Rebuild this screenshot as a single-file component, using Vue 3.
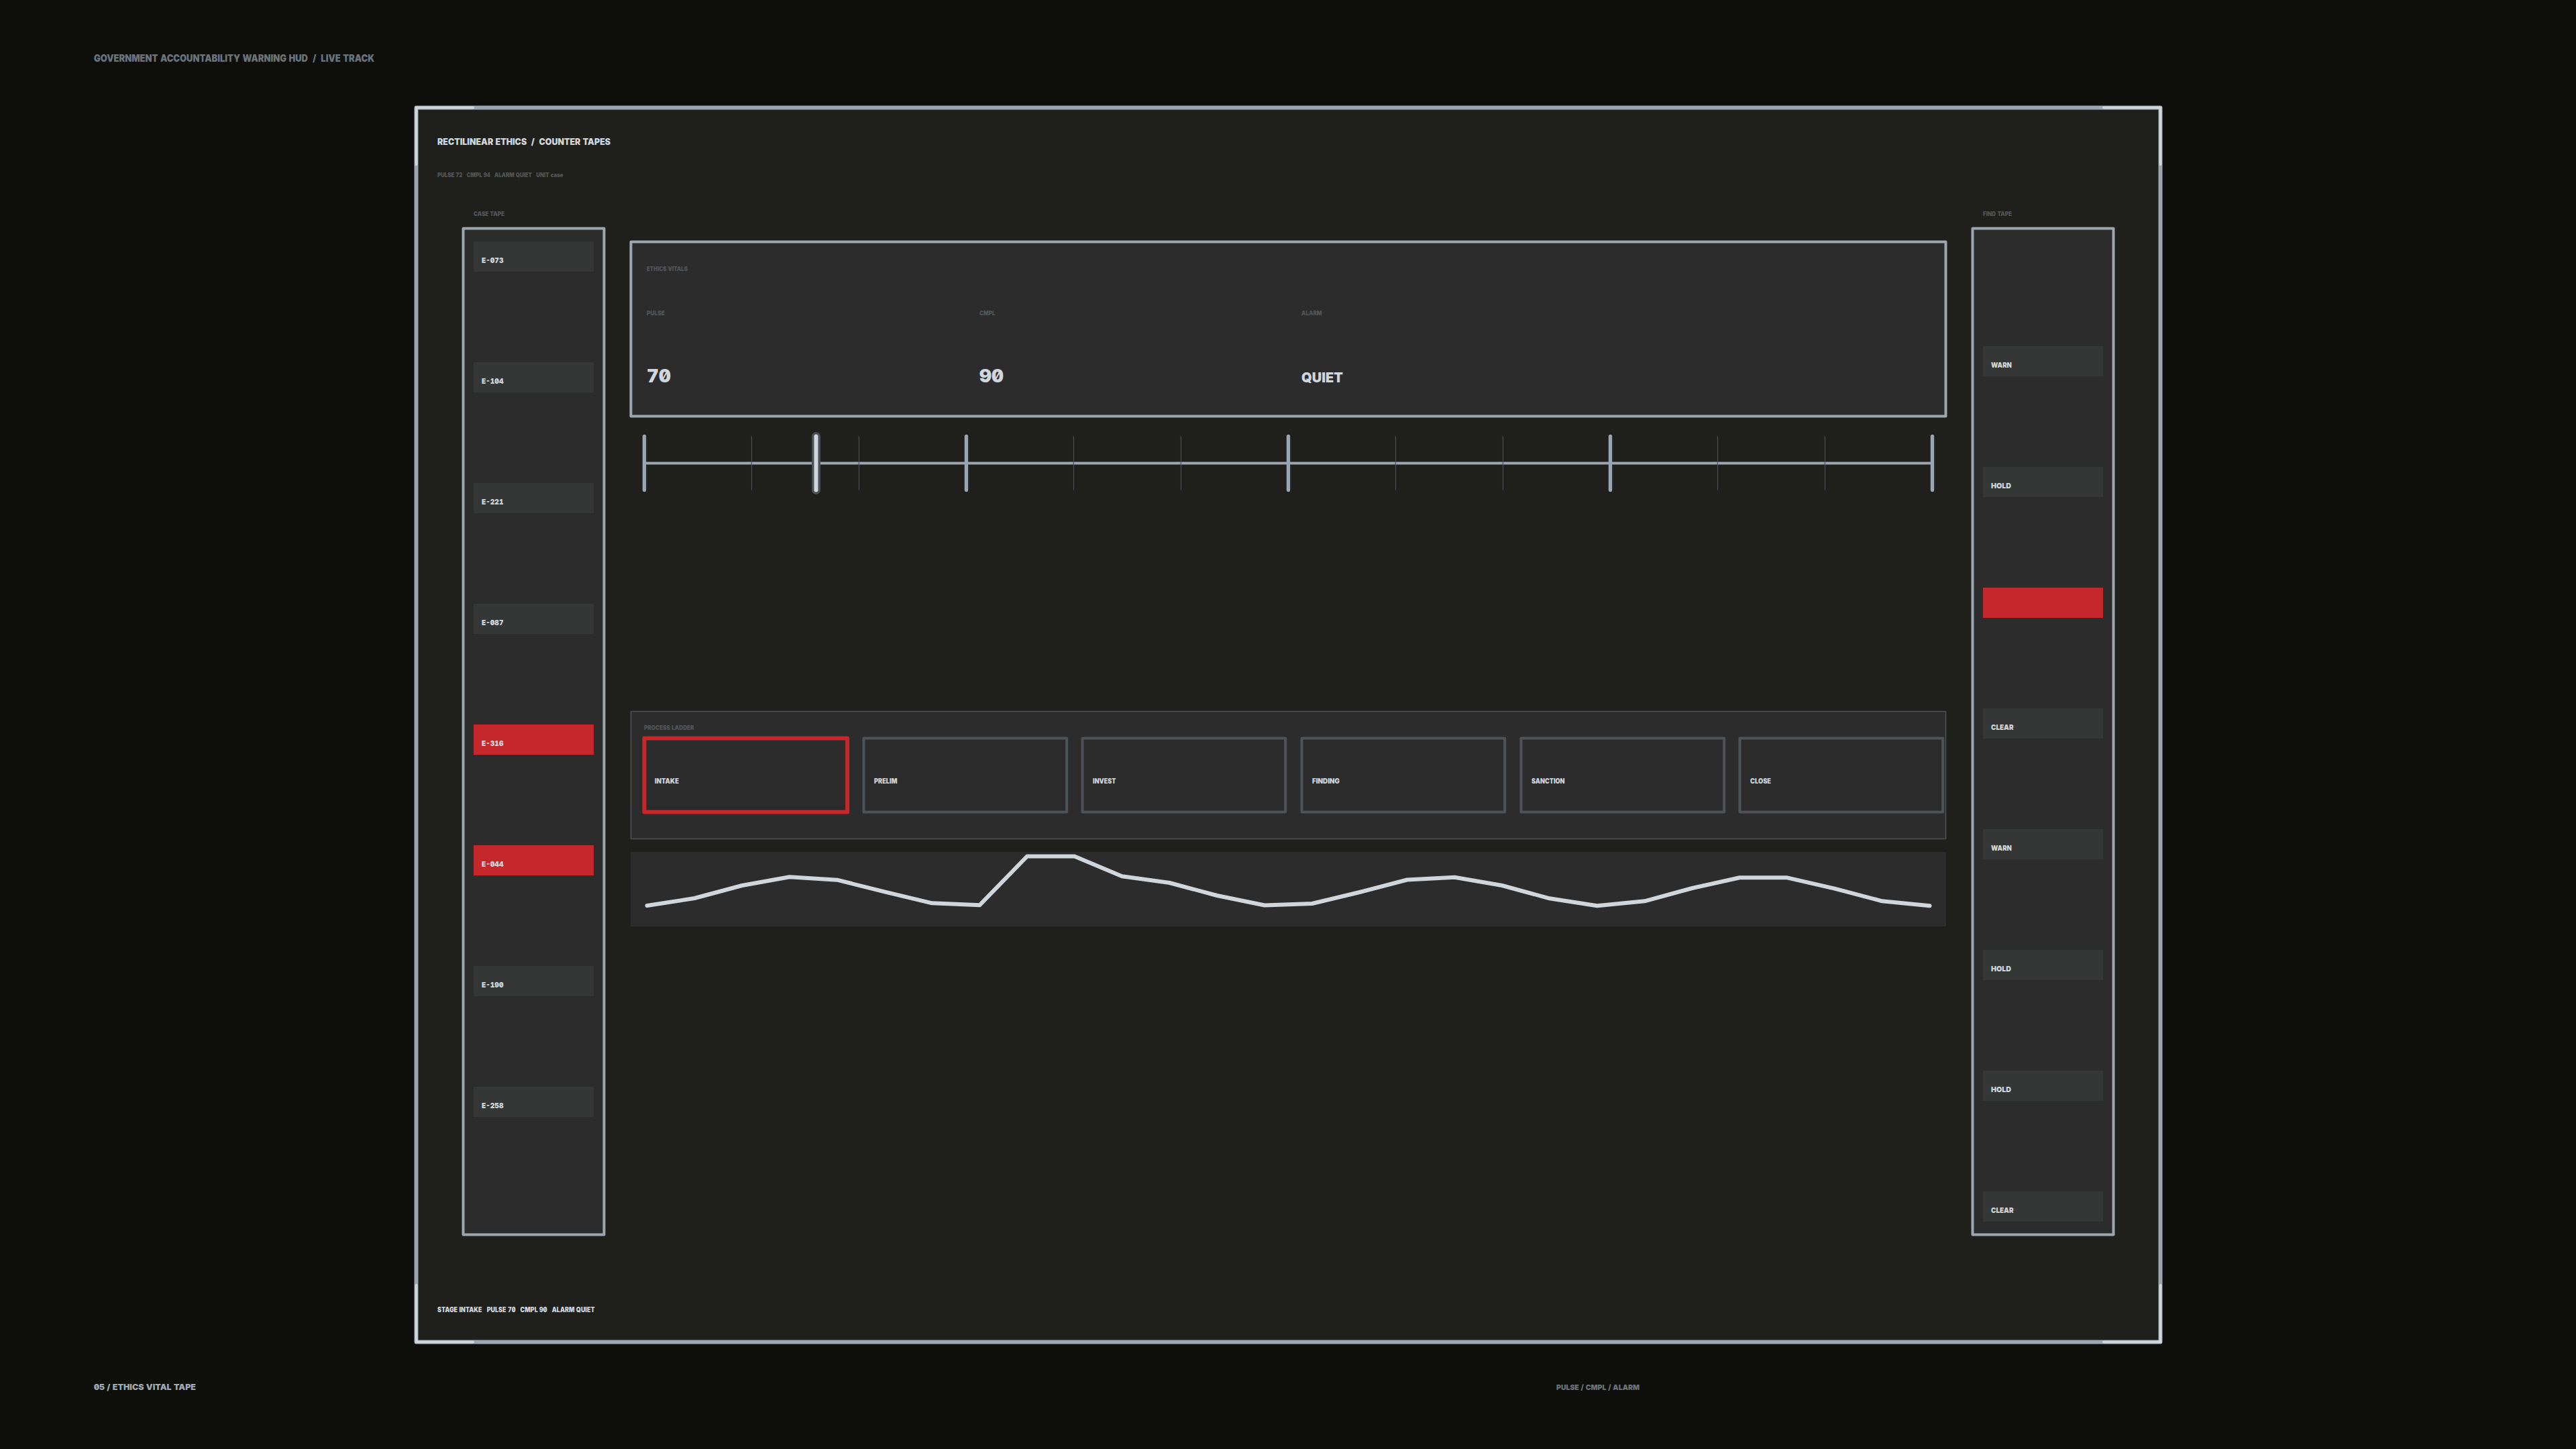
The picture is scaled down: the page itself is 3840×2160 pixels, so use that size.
<script setup>
import { h } from 'vue'

// One line of text set to an exact advance, sitting on the bottom edge of its box.
const Label = (props) =>
  h('svg', { class: 'label', width: props.w, height: props.size, style: { fontSize: props.size + 'px' } }, [
    h(
      'text',
      {
        x: 0,
        y: props.size,
        textLength: props.w,
        lengthAdjust: 'spacingAndGlyphs',
        style: { whiteSpace: 'pre' },
      },
      props.text,
    ),
  ])
Label.props = ['text', 'w', 'size']

const caseTape = [
  { id: 'E-073', hot: false },
  { id: 'E-104', hot: false },
  { id: 'E-221', hot: false },
  { id: 'E-087', hot: false },
  { id: 'E-316', hot: true },
  { id: 'E-044', hot: true },
  { id: 'E-190', hot: false },
  { id: 'E-258', hot: false },
]

const findTape = [
  { id: 'WARN', w: 31 },
  { id: 'HOLD', w: 30 },
  { id: '', w: 0, hot: true },
  { id: 'CLEAR', w: 33.5 },
  { id: 'WARN', w: 31 },
  { id: 'HOLD', w: 30 },
  { id: 'HOLD', w: 30 },
  { id: 'CLEAR', w: 33.5 },
]

const vitals = [
  { name: 'PULSE', nw: 27, value: '70', vw: 36, size: 27 },
  { name: 'CMPL', nw: 23.5, value: '90', vw: 36, size: 27 },
  { name: 'ALARM', nw: 30.5, value: 'QUIET', vw: 62, size: 20 },
]

const steps = [
  { name: 'INTAKE', w: 36, active: true },
  { name: 'PRELIM', w: 34.5 },
  { name: 'INVEST', w: 34.5 },
  { name: 'FINDING', w: 41 },
  { name: 'SANCTION', w: 49.5 },
  { name: 'CLOSE', w: 31 },
]

const ticks = Array.from({ length: 13 }, (_, i) => ({ x: i * 160 + 0.5, major: i % 3 === 0 }))

const levels = [
  80, 69, 50, 37.3, 41.7, 59.3, 76.3, 79.3, 6.6, 6.6, 36.3, 46, 65, 79.5, 77, 60, 41.5, 37.7, 50, 69.3, 80.3, 73.3, 54,
  38.3, 38.3, 54.6, 73.3, 80.3,
]
const trace = levels.map((y, i) => `${(24.5 + (i * 1912) / 27).toFixed(1)},${y}`).join(' ')
</script>

<template>
  <main class="screen">
    <header class="masthead">
      <Label text="GOVERNMENT ACCOUNTABILITY WARNING HUD  /  LIVE TRACK" :w="418" :size="14" />
    </header>

    <section class="frame">
      <svg class="edge edge-frame"><rect x="0.5" y="0.5" width="100%" height="100%" /></svg>
      <svg class="corners" viewBox="0 0 2600 1840">
        <path d="M.5 85V.5H85M2516 .5H2600.5V85M.5 1756V1840.5H85M2516 1840.5H2600.5V1756" />
      </svg>

      <div class="heading">
        <Label class="bright" text="RECTILINEAR ETHICS  /  COUNTER TAPES" :w="258" :size="13" />
        <Label class="dim sub" text="PULSE 72   CMPL 94   ALARM QUIET   UNIT case" :w="187.5" :size="9" />
      </div>

      <div class="columns">
        <aside class="column">
          <Label class="dim tape-name" text="CASE TAPE" :w="46" :size="9" />
          <div class="tape">
            <svg class="edge"><rect x="0.5" y="0.5" width="100%" height="100%" /></svg>
            <div v-for="c in caseTape" :key="c.id" class="cell" :class="{ hot: c.hot }">
              <Label class="bright" :text="c.id" :w="32.5" :size="11" />
            </div>
          </div>
        </aside>

        <div class="center">
          <section class="vitals">
            <svg class="edge"><rect x="0.5" y="0.5" width="100%" height="100%" /></svg>
            <Label class="dim vitals-name" text="ETHICS VITALS" :w="61" :size="9" />
            <div class="readings">
              <div v-for="v in vitals" :key="v.name" class="reading">
                <Label class="dim" :text="v.name" :w="v.nw" :size="9" />
                <Label class="bright value" :text="v.value" :w="v.vw" :size="v.size" />
              </div>
            </div>
          </section>

          <svg class="scale" viewBox="0 0 1920 80" width="1920" height="80">
            <path class="axis" d="M.5 40.5H1920.5" />
            <path v-for="t in ticks" :key="t.x" :class="t.major ? 'major' : 'minor'" :d="`M${t.x} .5V80.5`" />
            <path class="cursor-halo" d="M256.5 .5V80.5" />
            <path class="cursor" d="M256.5 .5V80.5" />
          </svg>

          <section class="ladder">
            <svg class="edge edge-quiet"><rect x="0.5" y="0.5" width="100%" height="100%" /></svg>
            <Label class="dim ladder-name" text="PROCESS LADDER" :w="74.5" :size="9" />
            <div class="steps">
              <div v-for="s in steps" :key="s.name" class="step">
                <svg class="edge" :class="s.active ? 'edge-active' : 'edge-step'">
                  <rect x="0.5" y="0.5" width="100%" height="100%" />
                </svg>
                <Label class="bright" :text="s.name" :w="s.w" :size="10" />
              </div>
            </div>
          </section>

          <svg class="trace" viewBox="0 0 1961 111" width="1961" height="111">
            <polyline :points="trace" />
          </svg>
        </div>

        <aside class="column find">
          <Label class="dim tape-name" text="FIND TAPE" :w="43" :size="9" />
          <div class="tape">
            <svg class="edge"><rect x="0.5" y="0.5" width="100%" height="100%" /></svg>
            <div v-for="(f, i) in findTape" :key="i" class="cell" :class="{ hot: f.hot }">
              <Label v-if="f.id" class="bright" :text="f.id" :w="f.w" :size="11" />
            </div>
          </div>
        </aside>
      </div>

      <div class="status">
        <Label class="bright" text="STAGE INTAKE   PULSE 70   CMPL 90   ALARM QUIET" :w="234.5" :size="10" />
      </div>
    </section>

    <footer class="footer">
      <Label class="plate" text="05 / ETHICS VITAL TAPE" :w="152" :size="12" />
      <Label text="PULSE / CMPL / ALARM" :w="124" :size="11" />
    </footer>
  </main>
</template>

<style>
body {
  background: #0e0f0a;
}
</style>

<style scoped>
.screen {
  display: flex;
  flex-direction: column;
  width: 3840px;
  height: 2160px;
  overflow: hidden;
  background: #0e0f0a;
  color: #6b737b;
  font-family: Inter, 'Liberation Sans', sans-serif;
  font-weight: 900;
  font-feature-settings: 'zero', 'tnum';
}
.label {
  display: block;
  flex: none;
  overflow: visible;
  fill: currentColor;
  position: relative;
}
.bright {
  color: #cfd6dc;
}
.dim {
  color: #505459;
}
.masthead {
  height: 82px;
  padding: 78px 0 0 140px;
}
.frame {
  position: relative;
  width: 2600px;
  height: 1840px;
  margin-left: 620px;
  flex: none;
}
.edge {
  position: absolute;
  left: 0;
  top: 0;
  width: 100%;
  height: 100%;
  overflow: visible;
  fill: #2c2c2c;
  stroke: #9ca6b0;
  stroke-width: 4;
  stroke-linejoin: round;
}
.edge-frame {
  fill: #1f201b;
  stroke-width: 6;
}
.edge-quiet {
  stroke: #4b5055;
  stroke-width: 1.6;
}
.edge-step {
  fill: #2b2b2b;
  stroke: #4d5356;
}
.edge-active {
  fill: #2b2b2b;
  stroke: #c4282b;
  stroke-width: 6;
}
.corners {
  position: absolute;
  left: 0;
  top: 0;
  width: 2600px;
  height: 1840px;
  overflow: visible;
  fill: none;
  stroke: #cfd6dc;
  stroke-width: 4;
  stroke-linecap: round;
  stroke-linejoin: round;
}
.heading {
  height: 110px;
  padding: 43px 0 0 32px;
}
.sub {
  margin-top: 39px;
}
.columns {
  display: flex;
  height: 1527px;
  padding: 0 70px;
  justify-content: space-between;
}
.tape-name {
  margin-left: 16px;
}
.tape {
  position: relative;
  width: 210px;
  height: 1500px;
  margin-top: 18px;
  padding: 20px 0 0 16px;
  box-sizing: border-box;
  display: flex;
  flex-direction: column;
  gap: 135px;
}
.find .tape {
  padding-top: 176px;
}
.cell {
  position: relative;
  flex: none;
  width: 179px;
  height: 45px;
  box-sizing: border-box;
  padding: 21px 0 0 12px;
  background: #343736;
}
.hot {
  background: #c4282b;
}
.center {
  display: flex;
  flex-direction: column;
  width: 1961px;
  padding-top: 47px;
  margin-right: -1px;
}
.vitals {
  position: relative;
  width: 1960px;
  height: 260px;
  margin-bottom: 30px;
  padding: 35px 0 0 24px;
  box-sizing: border-box;
}
.readings {
  display: grid;
  grid-template-columns: 496px 480px 480px;
  margin-top: 57px;
}
.reading {
  display: flex;
  flex-direction: column;
  justify-content: space-between;
  height: 109px;
}
.scale {
  position: relative;
  margin-left: 20px;
  overflow: visible;
  fill: none;
  stroke-linecap: round;
}
.axis {
  stroke: #9ca6b0;
  stroke-width: 4;
}
.major {
  stroke: #9ca6b0;
  stroke-width: 5.4;
}
.minor {
  stroke: #4e5257;
  stroke-width: 1.2;
  stroke-linecap: butt;
}
.cursor-halo {
  stroke: #4b5055;
  stroke-width: 13;
}
.cursor {
  stroke: #cfd6dc;
  stroke-width: 6;
}
.ladder {
  position: relative;
  width: 1960px;
  height: 190px;
  margin-top: 330px;
  padding: 19px 0 0 20px;
  box-sizing: border-box;
}
.steps {
  display: flex;
  gap: 24px;
  margin-top: 12px;
}
.step {
  position: relative;
  flex: none;
  width: 302.67px;
  height: 110px;
  box-sizing: border-box;
  padding: 58px 0 0 16px;
}
.trace {
  position: relative;
  margin-top: 20px;
  background: #2c2c2c;
  fill: none;
  stroke: #cfd6dc;
  stroke-width: 6;
  stroke-linecap: round;
  stroke-linejoin: round;
}
.status {
  padding: 106px 0 0 32px;
}
.footer {
  display: flex;
  align-items: flex-end;
  height: 72px;
  padding-left: 140px;
}
.footer .label + .label {
  margin-left: 2028px;
}
.plate {
  color: #a0a9b2;
}
</style>
